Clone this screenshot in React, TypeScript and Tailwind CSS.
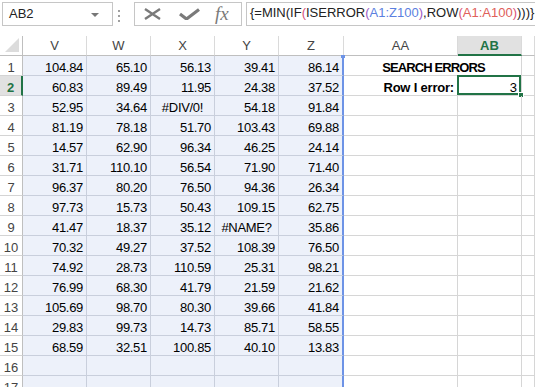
import React from 'react';

const data: string[][] = [
  ['104.84', '65.10', '56.13', '39.41', '86.14'],
  ['60.83', '89.49', '11.95', '24.38', '37.52'],
  ['52.95', '34.64', '#DIV/0!', '54.18', '91.84'],
  ['81.19', '78.18', '51.70', '103.43', '69.88'],
  ['14.57', '62.90', '96.34', '46.25', '24.14'],
  ['31.71', '110.10', '56.54', '71.90', '71.40'],
  ['96.37', '80.20', '76.50', '94.36', '26.34'],
  ['97.73', '15.73', '50.43', '109.15', '62.75'],
  ['41.47', '18.37', '35.12', '#NAME?', '35.86'],
  ['70.32', '49.27', '37.52', '108.39', '76.50'],
  ['74.92', '28.73', '110.59', '25.31', '98.21'],
  ['76.99', '68.30', '41.79', '21.59', '21.62'],
  ['105.69', '98.70', '80.30', '39.66', '41.84'],
  ['29.83', '99.73', '14.73', '85.71', '58.55'],
  ['68.59', '32.51', '100.85', '40.10', '13.83'],
  ['', '', '', '', ''],
  ['', '', '', '', ''],
];

const cols = ['V', 'W', 'X', 'Y', 'Z'];

function Toolbar() {
  return (
    <div className="flex items-start h-[36px] pl-[2px] pt-[2px] bg-white overflow-hidden">
      <div className="relative w-[111px] h-[24px] border border-[#c6c6c6] shrink-0">
        <span className="absolute left-[6px] top-[2px] text-[13px] leading-[18px] text-[#222]">AB2</span>
        <div className="absolute left-[88px] top-[10px] w-0 h-0 border-l-[4px] border-r-[4px] border-t-[4px] border-l-transparent border-r-transparent border-t-[#777]" />
      </div>
      <div className="ml-[5px] mt-[8px] flex flex-col gap-[3px] shrink-0">
        <div className="w-[2px] h-[2px] bg-[#a0a0a0]" />
        <div className="w-[2px] h-[2px] bg-[#a0a0a0]" />
        <div className="w-[2px] h-[2px] bg-[#a0a0a0]" />
      </div>
      <div className="ml-[14px] w-[108px] h-[24px] border border-[#c6c6c6] flex items-center pl-[8px] shrink-0">
        <svg width="19" height="12" viewBox="0 0 19 12" className="shrink-0">
          <path d="M2 1 L17 11 M17 1 L2 11" stroke="#7a7a7a" strokeWidth="2.4" fill="none" />
        </svg>
        <svg width="21" height="12" viewBox="0 0 21 12" className="ml-[17px] shrink-0">
          <path d="M1 6 L7.5 11 L20 1.5" stroke="#7a7a7a" strokeWidth="3.2" fill="none" strokeLinejoin="miter" />
        </svg>
        <span className="ml-[15px] text-[19px] leading-[20px] italic text-[#7a7a7a] font-['Liberation_Serif',serif] shrink-0">fx</span>
      </div>
      <div className="ml-[4px] w-[300px] h-[24px] border border-[#c6c6c6] pl-[3px] shrink-0 whitespace-nowrap text-[13px] leading-[20px] text-[#222]">
        <span>{'{=MIN(IF'}</span>
        <span className="text-[#d9517a]">(</span>
        <span>ISERROR</span>
        <span className="text-[#9b5ac4]">(</span>
        <span className="text-[#5b7fe0]">A1:Z100</span>
        <span className="text-[#9b5ac4]">)</span>
        <span>,ROW</span>
        <span className="text-[#d9517a]">(</span>
        <span className="text-[#e0605a]">A1:A100</span>
        <span className="text-[#d9517a]">)</span>
        <span>{')))}'}</span>
      </div>
    </div>
  );
}

export default function App() {
  const hdr = 'h-[20px] leading-[20px] text-center text-[13px] text-[#444] bg-white border-r border-b border-r-[#dadada] border-b-[#bfbfbf]';
  const cellBase = 'h-[20px] border-r border-b text-[13px] leading-[17px] pt-[3px] text-black whitespace-nowrap';
  return (
    <div className="w-[535px] h-[387px] overflow-hidden bg-white font-['Liberation_Sans',Arial,sans-serif]">
      <Toolbar />
      <div className="grid grid-cols-[23px_64px_64px_64px_64px_65px_114px_64px_1fr] auto-rows-[20px]">
        {/* header row */}
        <div className="relative h-[20px] bg-white border-r border-b border-r-[#bfbfbf] border-b-[#bfbfbf]">
          <div className="absolute right-[3px] bottom-[3px] w-0 h-0 border-l-[13px] border-t-[13px] border-l-transparent border-t-transparent border-r-0 border-b-0" style={{ borderBottom: '0', borderRight: '0' }} />
          <svg width="14" height="14" className="absolute right-[3px] bottom-[3px]">
            <polygon points="14,0 14,14 0,14" fill="#dcdcdc" />
          </svg>
        </div>
        {cols.map((c) => (
          <div key={c} className={hdr}>{c}</div>
        ))}
        <div className={hdr}>AA</div>
        <div className="h-[20px] leading-[19px] text-center text-[13px] font-bold text-[#217346] bg-[#e1e1e1] border-r border-r-[#dadada] border-b-2 border-b-[#217346]">AB</div>
        <div className={hdr}></div>

        {data.map((row, ri) => {
          const n = ri + 1;
          const isActive = n === 2;
          return (
            <React.Fragment key={n}>
              <div
                className={
                  isActive
                    ? 'h-[20px] leading-[17px] pt-[3px] text-center text-[13px] font-bold text-[#217346] bg-[#e1e1e1] border-b border-b-[#d4d4d4] border-r-2 border-r-[#217346]'
                    : 'h-[20px] leading-[17px] pt-[3px] text-center text-[13px] text-[#444] bg-white border-b border-b-[#d4d4d4] border-r border-r-[#bfbfbf]'
                }
              >
                {n}
              </div>
              {row.map((v, ci) => {
                const isErr = v.startsWith('#');
                const isZ = ci === 4;
                return (
                  <div
                    key={ci}
                    className={
                      cellBase +
                      ' relative bg-[#edf1fa] border-b-[#c9cfdc] tracking-[-0.3px] ' +
                      (isZ ? 'border-r-2 border-r-[#6d93e6] ' : 'border-r-[#c9cfdc] ') +
                      (isErr ? 'text-center' : 'text-right pr-[3px]')
                    }
                  >
                    {v}
                    {isZ && n === 1 && (
                      <div className="absolute -top-[1px] -right-[3px] w-[4px] h-[3px] bg-[#6d93e6]" />
                    )}
                  </div>
                );
              })}
              {n === 1 ? (
                <div className={cellBase + ' col-span-2 border-r-[#d6d6d6] border-b-[#d6d6d6] text-center font-bold tracking-[-0.9px] pl-[2px]'}>
                  SEARCH ERRORS
                </div>
              ) : (
                <>
                  <div className={cellBase + ' border-r-[#d6d6d6] border-b-[#d6d6d6] text-right pr-[3px] font-bold tracking-[-0.2px]'}>
                    {n === 2 ? 'Row I error:' : ''}
                  </div>
                  <div className={cellBase + ' relative border-r-[#d6d6d6] border-b-[#d6d6d6] text-right pr-[4px]'}>
                    {n === 2 ? '3' : ''}
                    {n === 2 && (
                      <>
                        <div className="absolute -left-[1px] -top-[1px] right-0 bottom-0 border-2 border-[#217346]" />
                        <div className="absolute -right-[3px] -bottom-[3px] w-[6px] h-[6px] bg-[#217346] border border-white" />
                      </>
                    )}
                  </div>
                </>
              )}
              <div className={cellBase + ' border-r-[#d6d6d6] border-b-[#d6d6d6]'}></div>
            </React.Fragment>
          );
        })}
      </div>
    </div>
  );
}
